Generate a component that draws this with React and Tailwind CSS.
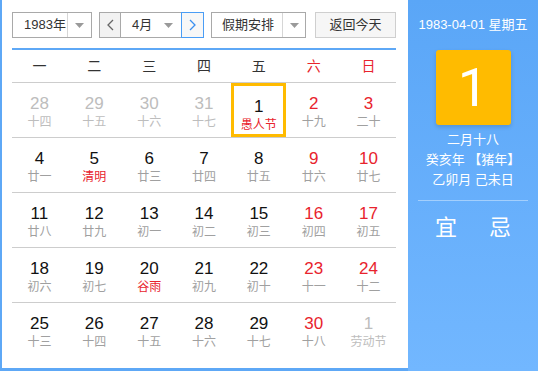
import React from "react";

const FONT = { fontFamily: '"Liberation Sans", Arial, "Noto Sans CJK SC", sans-serif' };

const WEEK = ["一", "二", "三", "四", "五", "六", "日"];

// kind: o = other month, w = weekend, n = normal; lc = lunar colour (r = red)
const ROWS = [
  [
    ["28", "十四", "o"], ["29", "十五", "o"], ["30", "十六", "o"], ["31", "十七", "o"],
    ["1", "愚人节", "n", "r", true], ["2", "十九", "w"], ["3", "二十", "w"],
  ],
  [
    ["4", "廿一", "n"], ["5", "清明", "n", "r"], ["6", "廿三", "n"], ["7", "廿四", "n"],
    ["8", "廿五", "n"], ["9", "廿六", "w"], ["10", "廿七", "w"],
  ],
  [
    ["11", "廿八", "n"], ["12", "廿九", "n"], ["13", "初一", "n"], ["14", "初二", "n"],
    ["15", "初三", "n"], ["16", "初四", "w"], ["17", "初五", "w"],
  ],
  [
    ["18", "初六", "n"], ["19", "初七", "n"], ["20", "谷雨", "n", "r"], ["21", "初九", "n"],
    ["22", "初十", "n"], ["23", "十一", "w"], ["24", "十二", "w"],
  ],
  [
    ["25", "十三", "n"], ["26", "十四", "n"], ["27", "十五", "n"], ["28", "十六", "n"],
    ["29", "十七", "n"], ["30", "十八", "w"], ["1", "劳动节", "o"],
  ],
];

function Caret() {
  return (
    <svg width="9" height="5" viewBox="0 0 9 5">
      <path d="M0 0 L9 0 L4.5 5 Z" fill="#9a9a9a" />
    </svg>
  );
}

function Chevron({ dir, color }) {
  return (
    <svg width="7" height="12" viewBox="0 0 7 12">
      <polyline
        points={dir === "left" ? "6,1 1,6 6,11" : "1,1 6,6 1,11"}
        fill="none"
        stroke={color}
        strokeWidth="1.3"
      />
    </svg>
  );
}

function Cell({ day, lunar, kind, lc, selected }) {
  const numColor =
    kind === "o" ? "text-[#bdbdbd]" : kind === "w" ? "text-[#e8232d]" : "text-[#111]";
  const lunarColor =
    kind === "o" ? "text-[#bdbdbd]" : lc === "r" ? "text-[#e8232d]" : "text-[#a0a0a0]";
  return (
    <div
      className={`flex h-[54px] flex-col items-center pt-[10px] ${
        selected ? "border-[3px] border-[#ffbb00] pt-[7px]" : ""
      }`}
    >
      <span className={`text-[17px] leading-[21px] ${numColor}`}>{day}</span>
      <span className={`text-[12px] leading-[16px] ${lunarColor}`}>{lunar}</span>
    </div>
  );
}

export default function App() {
  return (
    <div className="flex h-[371px] w-[538px] overflow-hidden" style={FONT}>
      <div className="h-[371px] w-[408px] shrink-0 bg-[#5ea8f6] pb-[3px] pl-[2px]">
        <div className="h-[368px] w-[406px] bg-white pl-[10px] pt-[12px]">
          <div className="flex h-[26px] items-stretch text-[13px] text-[#333]">
            <div className="flex w-[80px] border border-[#a9a9a9] bg-white">
              <div className="flex w-[54px] items-center pl-[11px]">1983年</div>
              <div className="flex flex-1 items-center justify-center border-l border-[#d6d6d6]">
                <Caret />
              </div>
            </div>
            <div className="ml-[7px] flex w-[105px]">
              <div className="flex w-[22px] items-center justify-center border border-[#a9a9a9] bg-[#f2f2f2]">
                <Chevron dir="left" color="#666" />
              </div>
              <div className="flex w-[60px] items-center border-y border-[#a9a9a9] bg-white pl-[11px]">
                <span>4月</span>
                <span className="ml-auto mr-[8px] flex">
                  <Caret />
                </span>
              </div>
              <div className="flex w-[23px] items-center justify-center border border-[#4a9df5] bg-[#f7f7f7]">
                <Chevron dir="right" color="#3a8ff0" />
              </div>
            </div>
            <div className="ml-[7px] flex w-[95px] border border-[#a9a9a9] bg-white">
              <div className="flex w-[70px] items-center pl-[10px]">假期安排</div>
              <div className="flex flex-1 items-center justify-center border-l border-[#d6d6d6]">
                <Caret />
              </div>
            </div>
            <div className="ml-[9px] flex w-[81px] items-center justify-center border border-[#cfcfcf] bg-[#f6f6f6]">
              返回今天
            </div>
          </div>

          <div className="mt-[10px] w-[384px] border-t-2 border-[#5ea8f6]">
            <div className="grid h-[33px] grid-cols-7 border-b border-[#cdcdcd] text-[14px]">
              {WEEK.map((w, i) => (
                <div
                  key={w}
                  className={`flex items-center justify-center ${
                    i >= 5 ? "text-[#e8232d]" : "text-[#333]"
                  }`}
                >
                  {w}
                </div>
              ))}
            </div>
            {ROWS.map((row, r) => (
              <div
                key={r}
                className={`grid grid-cols-7 ${
                  r < ROWS.length - 1 ? "border-b border-[#cdcdcd]" : ""
                }`}
              >
                {row.map(([day, lunar, kind, lc, selected], c) => (
                  <Cell key={c} day={day} lunar={lunar} kind={kind} lc={lc} selected={selected} />
                ))}
              </div>
            ))}
          </div>
        </div>
      </div>

      <div className="flex h-[371px] w-[130px] flex-col items-center bg-gradient-to-b from-[#5aa6f7] to-[#72b7ff] text-white">
        <div className="mt-[15px] text-[13px] leading-[20px]">1983-04-01 星期五</div>
        <div
          className="mt-[15px] flex h-[75px] w-[75px] items-center justify-center rounded-[3px] bg-[#ffbb00] text-[54px] font-normal shadow-[0_2px_4px_rgba(0,0,0,0.15)]"
          style={{ fontFamily: 'Roboto, "Liberation Sans", sans-serif' }}
        >
          1
        </div>
        <div className="mt-[5px] flex flex-col items-center text-[13px] leading-[20px]">
          <span>二月十八</span>
          <span>癸亥年 【猪年】</span>
          <span>乙卯月 己未日</span>
        </div>
        <div className="mt-[10px] h-px w-[110px] bg-white/40" />
        <div className="mt-[12px] flex h-[30px] items-center gap-[32px] text-[22px] leading-[30px]">
          <span>宜</span>
          <span>忌</span>
        </div>
      </div>
    </div>
  );
}
